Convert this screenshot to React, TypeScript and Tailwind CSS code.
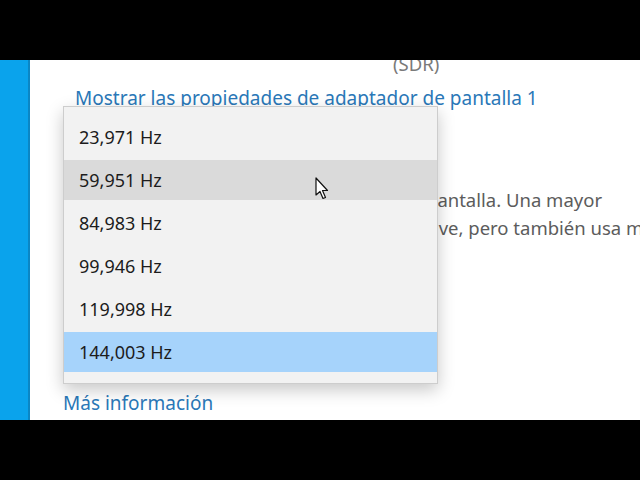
import React from "react";

const rates = [
  { label: "23,971 Hz" },
  { label: "59,951 Hz", hover: true },
  { label: "84,983 Hz" },
  { label: "99,946 Hz" },
  { label: "119,998 Hz" },
  { label: "144,003 Hz", selected: true },
];

function Cursor() {
  return (
    <svg
      className="absolute left-[315px] top-[117px]"
      width="14"
      height="24"
      viewBox="0 0 14 24"
    >
      <path
        d="M1 1 L1 18 L5 14.5 L8 21.5 L10.5 20.5 L7.5 13.5 L12.5 13.5 Z"
        fill="#ffffff"
        stroke="#111111"
        strokeWidth="1.2"
        strokeLinejoin="round"
      />
    </svg>
  );
}

function RateDropdown() {
  return (
    <div className="absolute left-[63px] top-[46px] w-[375px] border border-[#cdcdcd] bg-[#f2f2f2] pt-[10px] pb-[11px] shadow-[0_6px_16px_rgba(0,0,0,0.22)]">
      <ul className="flex flex-col gap-[3px]">
        {rates.map((r) => (
          <li
            key={r.label}
            className={
              "flex h-[40px] items-center pl-[15px] text-[18px] text-[#1c1c1c] " +
              (r.selected ? "bg-[#a6d3fb]" : r.hover ? "bg-[#dadada]" : "")
            }
          >
            {r.label}
          </li>
        ))}
      </ul>
    </div>
  );
}

export default function App() {
  return (
    <div
      className="flex h-[480px] w-[640px] flex-col bg-black"
      style={{ fontFamily: '"Noto Sans", "Open Sans", sans-serif' }}
    >
      <div className="h-[60px] shrink-0 bg-black" />
      <div className="relative flex h-[360px] shrink-0 overflow-hidden">
        <div className="w-[30px] shrink-0 border-r-2 border-[#0b86c4] bg-[#0aa3ec]" />
        <main className="flex flex-1 flex-col bg-white">
          <div className="mt-[-8px] pl-[363px] text-[18.5px] leading-[24px] text-[#7a7a7a]">
            (SDR)
          </div>
          <a className="mt-[8px] pl-[45px] text-[19px] leading-[28px] text-[#2a78b8]">
            Mostrar las propiedades de adaptador de pantalla 1
          </a>
          <div className="mt-[74px] flex flex-col text-[18.5px] leading-[28px] text-[#5c5c5c]">
            <p className="whitespace-nowrap pl-[396px]">pantalla. Una mayor</p>
            <p className="whitespace-nowrap pl-[378px]">suave, pero también usa más energía.</p>
          </div>
          <a className="mt-[147px] pl-[33px] text-[19px] leading-[28px] text-[#2a78b8]">
            Más información
          </a>
        </main>
        <RateDropdown />
        <Cursor />
      </div>
      <div className="h-[60px] shrink-0 bg-black" />
    </div>
  );
}
